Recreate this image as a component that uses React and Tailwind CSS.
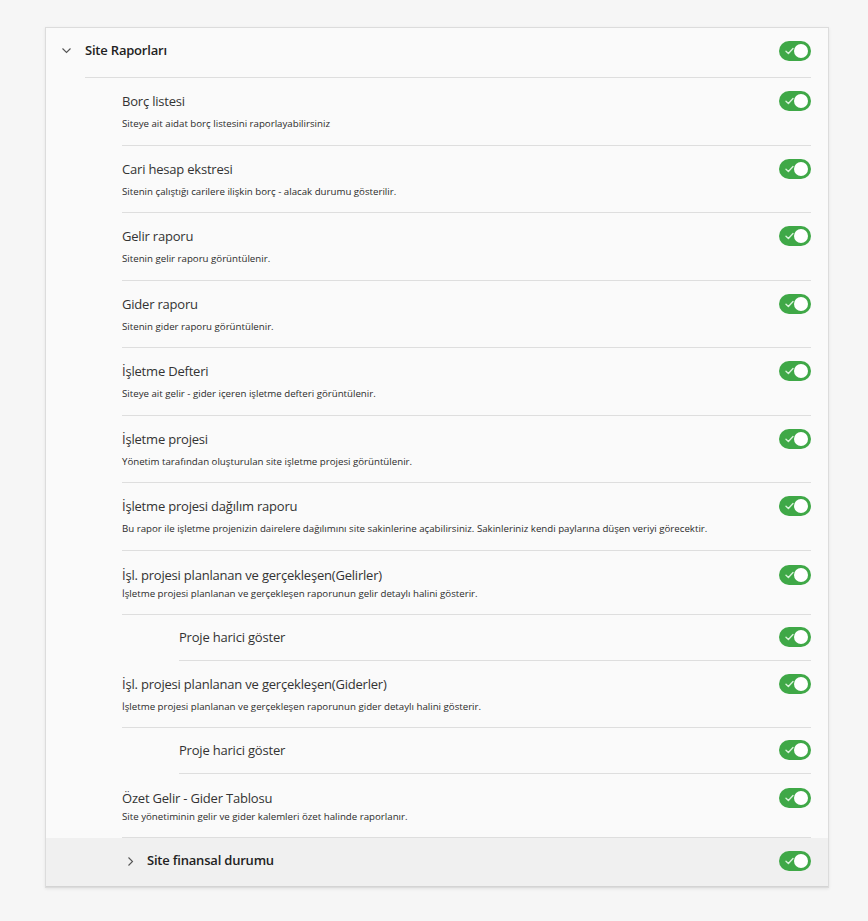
import React from "react";

function Toggle() {
  return (
    <div className="relative w-[32px] h-[20px] rounded-full bg-[#3fa847] shrink-0">
      <svg className="absolute left-[6px] top-[6px]" width="9" height="8" viewBox="0 0 9 8">
        <path d="M1 4.2 L3.4 6.4 L8 1.6" stroke="#d9f2db" strokeWidth="1.4" fill="none" strokeLinecap="round" strokeLinejoin="round" />
      </svg>
      <div className="absolute right-[3px] top-[3px] w-[14px] h-[14px] rounded-full bg-white" />
    </div>
  );
}

function Item({ title, desc, tight }) {
  return (
    <div className={`flex items-start border-b border-[#dedede] ${tight ? "pt-[15px] pb-[13px]" : "pt-[14px] pb-[13.5px]"}`}>
      <div className="flex-1 min-w-0">
        <div className="text-[13px] tracking-[-0.2px] leading-[18px] text-[#333]">{title}</div>
        <div className={`text-[9.7px] leading-[14px] text-[#2b2b2b] ${tight ? "mt-[3px]" : "mt-[7px]"}`}>{desc}</div>
      </div>
      <div className="h-[18px] flex items-center">
        <Toggle />
      </div>
    </div>
  );
}

function SubItem({ title }) {
  return (
    <div className="ml-[57px] flex items-center justify-between border-b border-[#dedede] pt-[12px] pb-[13px]">
      <div className="text-[13px] tracking-[-0.2px] leading-[18px] text-[#333]">{title}</div>
      <Toggle />
    </div>
  );
}

export default function App() {
  return (
    <div className="min-h-[921px] bg-[#f6f6f6] pt-[27px] pl-[45px]" style={{ fontFamily: '"Open Sans", "Noto Sans", sans-serif' }}>
      <div className="w-[784px] bg-[#fafafa] border border-[#dcdcdc] shadow-[0_1px_3px_rgba(0,0,0,0.08)]">
        <div className="flex items-center h-[45px] pl-[15px] pr-[17px]">
          <svg width="11" height="11" viewBox="0 0 11 11" className="mr-[13px]">
            <path d="M1.5 3.5 L5.5 7.5 L9.5 3.5" stroke="#555" strokeWidth="1.1" fill="none" />
          </svg>
          <div className="flex-1 text-[13px] tracking-[-0.2px] font-semibold text-[#222]">Site Raporları</div>
          <Toggle />
        </div>
        <div className="ml-[39px] mr-[17px] pt-[4px] border-b border-[#dedede]" />
        <div className="ml-[76px] mr-[17px]">
          <Item title="Borç listesi" desc="Siteye ait aidat borç listesini raporlayabilirsiniz" />
          <Item title="Cari hesap ekstresi" desc="Sitenin çalıştığı carilere ilişkin borç - alacak durumu gösterilir." />
          <Item title="Gelir raporu" desc="Sitenin gelir raporu görüntülenir." />
          <Item title="Gider raporu" desc="Sitenin gider raporu görüntülenir." />
          <Item title="İşletme Defteri" desc="Siteye ait gelir - gider içeren işletme defteri görüntülenir." />
          <Item title="İşletme projesi" desc="Yönetim tarafından oluşturulan site işletme projesi görüntülenir." />
          <Item title="İşletme projesi dağılım raporu" desc="Bu rapor ile işletme projenizin dairelere dağılımını site sakinlerine açabilirsiniz. Sakinleriniz kendi paylarına düşen veriyi görecektir." />
          <Item tight title="İşl. projesi planlanan ve gerçekleşen(Gelirler)" desc="İşletme projesi planlanan ve gerçekleşen raporunun gelir detaylı halini gösterir." />
          <SubItem title="Proje harici göster" />
          <Item title="İşl. projesi planlanan ve gerçekleşen(Giderler)" desc="İşletme projesi planlanan ve gerçekleşen raporunun gider detaylı halini gösterir." />
          <SubItem title="Proje harici göster" />
          <Item tight title="Özet Gelir - Gider Tablosu" desc="Site yönetiminin gelir ve gider kalemleri özet halinde raporlanır." />
        </div>
        <div className="flex items-center h-[49px] pb-[2px] bg-[#f0f0f0] pl-[79px] pr-[17px] border-b border-[#d4d4d4]">
          <svg width="11" height="11" viewBox="0 0 11 11" className="mr-[11px]">
            <path d="M3.5 1.5 L7.5 5.5 L3.5 9.5" stroke="#555" strokeWidth="1.1" fill="none" />
          </svg>
          <div className="flex-1 text-[13px] tracking-[-0.2px] font-semibold text-[#222]">Site finansal durumu</div>
          <Toggle />
        </div>
      </div>
    </div>
  );
}
